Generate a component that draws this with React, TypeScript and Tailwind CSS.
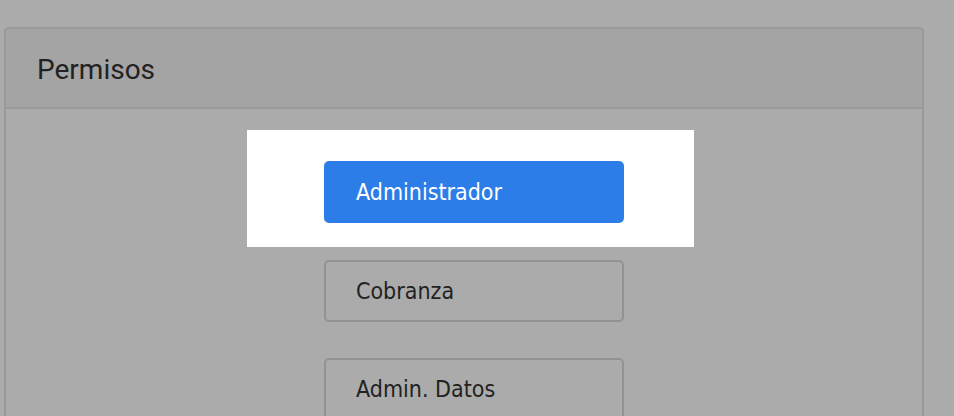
import React from "react";

export default function App() {
  const btnFont = { fontFamily: '"DejaVu Sans Condensed", "DejaVu Sans", Verdana, sans-serif' };
  return (
    <div className="w-[954px] h-[416px] overflow-hidden bg-[#ababab]">
      <div className="pt-[27px] pl-[4px] w-[924px]">
        <div className="border-2 border-[#999999] border-b-0 rounded-t-[5px] bg-[#ababab] h-[400px]">
          <div
            className="h-[80px] bg-[#a4a4a4] border-b-2 border-[#999999] rounded-t-[4px] pl-[31px] flex items-center"
            style={{ fontFamily: 'Roboto, "Liberation Sans", sans-serif' }}
          >
            <span className="text-[28px] text-[#222222] leading-none pt-[4px]">Permisos</span>
          </div>
          <div className="pt-[52px] pl-[318px] flex flex-col items-start">
            <div className="relative">
              <div className="absolute left-[-77px] top-[-31px] w-[447px] h-[117px] bg-white" />
              <div
                className="relative w-[300px] h-[62px] rounded-[5px] bg-[#2d7de9] text-white flex items-center pl-[32px] text-[23px]"
                style={btnFont}
              >
                Administrador
              </div>
            </div>
            <div
              className="mt-[37px] w-[300px] h-[62px] rounded-[5px] border-2 border-[#929292] text-[#222222] flex items-center pl-[30px] text-[23px]"
              style={btnFont}
            >
              Cobranza
            </div>
            <div
              className="mt-[36px] w-[300px] h-[62px] rounded-[5px] border-2 border-[#929292] text-[#222222] flex items-center pl-[30px] text-[23px]"
              style={btnFont}
            >
              Admin. Datos
            </div>
          </div>
        </div>
      </div>
    </div>
  );
}
